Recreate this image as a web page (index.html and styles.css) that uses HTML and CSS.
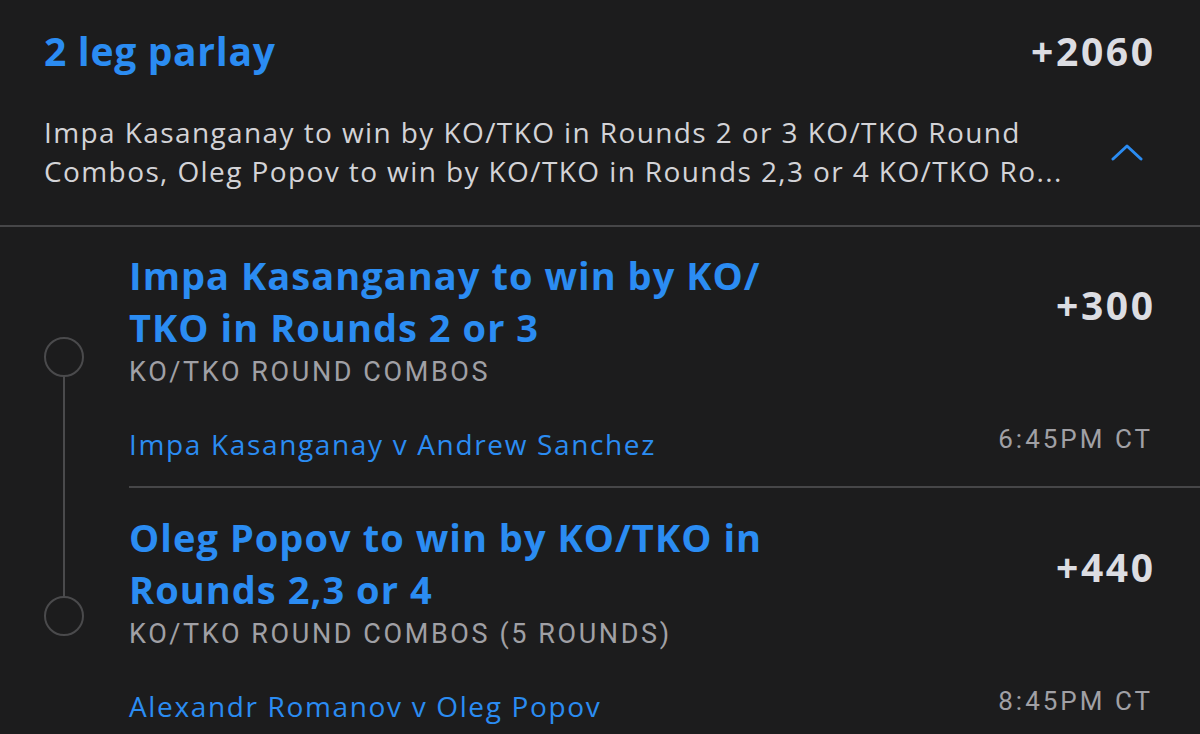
FILE: index.html
```html
<!DOCTYPE html>
<html>
<head>
<meta charset="utf-8">
<link rel="stylesheet" href="styles.css">
</head>
<body>
<div class="slip">
  <div class="header">
    <div class="head-row">
      <div class="parlay-title">2 leg parlay</div>
      <div class="odds">+2060</div>
    </div>
    <div class="desc-row">
      <div class="desc">
        <span class="desc-line">Impa Kasanganay to win by KO/TKO in Rounds 2 or 3 KO/TKO Round</span>
        <span class="desc-line">Combos, Oleg Popov to win by KO/TKO in Rounds 2,3 or 4 KO/TKO Ro...</span>
      </div>
      <svg class="chevron" width="32" height="20" viewBox="0 0 32 20"><polyline points="2,17 16,4 30,17" fill="none" stroke="#2b8cf2" stroke-width="3" stroke-linecap="round" stroke-linejoin="round"/></svg>
    </div>
  </div>

  <div class="leg leg-first">
    <div class="rail">
      <div class="circle circle-first"></div>
      <div class="line line-grow"></div>
    </div>
    <div class="leg-body">
      <div class="leg-top">
        <div class="leg-info">
          <div class="leg-title">Impa Kasanganay to win by KO/<br>TKO in Rounds 2 or 3</div>
          <div class="market">KO/TKO ROUND COMBOS</div>
        </div>
        <div class="odds leg-odds">+300</div>
      </div>
      <div class="event-row">
        <div class="event">Impa Kasanganay v Andrew Sanchez</div>
        <div class="time">6:45PM CT</div>
      </div>
    </div>
  </div>

  <div class="leg leg-second">
    <div class="rail">
      <div class="line line-top"></div>
      <div class="circle"></div>
    </div>
    <div class="leg-body leg-body-divided">
      <div class="leg-top">
        <div class="leg-info">
          <div class="leg-title">Oleg Popov to win by KO/TKO in<br>Rounds 2,3 or 4</div>
          <div class="market">KO/TKO ROUND COMBOS (5 ROUNDS)</div>
        </div>
        <div class="odds leg-odds">+440</div>
      </div>
      <div class="event-row">
        <div class="event">Alexandr Romanov v Oleg Popov</div>
        <div class="time">8:45PM CT</div>
      </div>
    </div>
  </div>
</div>
</body>
</html>
```
FILE: styles.css
```css
* { box-sizing: border-box; }
html, body {
  margin: 0;
  padding: 0;
  background: #1c1c1d;
}
body {
  width: 1200px;
  height: 734px;
  overflow: hidden;
  font-family: "Open Sans", Lato, sans-serif;
}
.slip { width: 1200px; }

.header {
  padding: 27px 47px 34px 44px;
  border-bottom: 2px solid #464648;
}
.head-row {
  display: flex;
  justify-content: space-between;
  align-items: baseline;
}
.parlay-title {
  font-size: 39px;
  line-height: 48px;
  font-weight: 700;
  letter-spacing: 0.7px;
  color: #2b8cf2;
}
.odds {
  font-size: 39px;
  line-height: 48px;
  font-weight: 700;
  letter-spacing: 2.6px;
  margin-right: -2.6px;
  color: #dcdde2;
}
.desc-row {
  margin-top: 38px;
  display: flex;
  justify-content: space-between;
  align-items: center;
}
.desc {
  display: flex;
  flex-direction: column;
}
.desc-line {
  font-size: 28px;
  line-height: 39px;
  letter-spacing: 1.4px;
  color: #d3d3d7;
  white-space: nowrap;
}
.chevron {
  margin-right: 10px;
  display: block;
}

.leg {
  display: grid;
  grid-template-columns: 129px 1fr;
}
.rail {
  display: flex;
  flex-direction: column;
  padding-left: 44px;
}
.circle {
  width: 40px;
  height: 40px;
  border: 2px solid #4a4a4c;
  border-radius: 50%;
  flex: none;
}
.circle-first { margin-top: 110px; }
.line {
  width: 2px;
  margin-left: 19px;
  background: #4a4a4c;
}
.line-grow { flex: 1; }
.line-top { height: 110px; flex: none; }

.leg-body {
  padding: 22px 47px 26px 0;
}
.leg-body-divided {
  border-top: 2px solid #464648;
  padding-top: 23px;
}
.leg-top {
  display: flex;
  justify-content: space-between;
  align-items: flex-start;
}
.leg-title {
  font-size: 38px;
  line-height: 52px;
  font-weight: 700;
  letter-spacing: 1.05px;
  color: #2b8cf2;
}
.leg-odds {
  margin-top: 32px;
}
.market {
  margin-top: 3px;
  font-family: Roboto, "Liberation Sans", sans-serif;
  font-size: 27px;
  line-height: 32px;
  letter-spacing: 2.6px;
  color: #a0a0a5;
}
.event-row {
  margin-top: 40px;
  display: flex;
  justify-content: space-between;
  align-items: flex-start;
}
.event {
  font-size: 28px;
  line-height: 32px;
  letter-spacing: 1.65px;
  color: #2b8cf2;
}
.time {
  font-family: Roboto, "Liberation Sans", sans-serif;
  font-size: 26px;
  line-height: 32px;
  letter-spacing: 3px;
  color: #a0a0a5;
  margin-top: -5px;
}
```
